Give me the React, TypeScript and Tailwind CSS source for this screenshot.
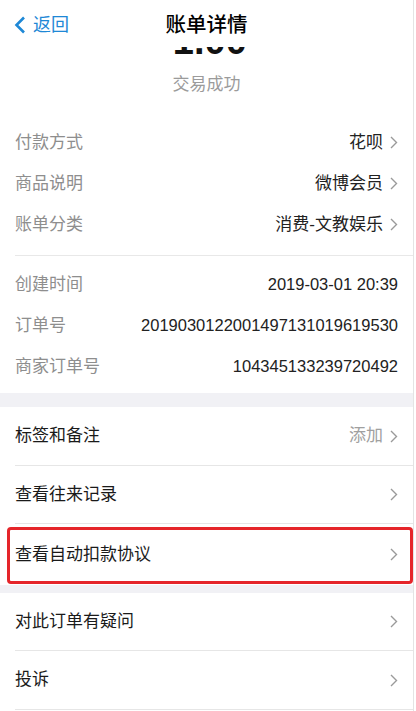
import React from 'react';

const FONT = { fontFamily: '"Liberation Sans", "Noto Sans CJK SC", sans-serif' };

function Chevron() {
  return (
    <svg width="8" height="13" viewBox="0 0 8 13" className="ml-[7px] shrink-0">
      <path d="M1 1 L6.5 6.5 L1 12" fill="none" stroke="#9a9a9a" strokeWidth="1.4" />
    </svg>
  );
}

type InfoRow = { label: string; value: string; arrow?: boolean; num?: boolean };

const basics: InfoRow[] = [
  { label: '付款方式', value: '花呗', arrow: true },
  { label: '商品说明', value: '微博会员', arrow: true },
  { label: '账单分类', value: '消费-文教娱乐', arrow: true },
];

const orderInfo: InfoRow[] = [
  { label: '创建时间', value: '2019-03-01 20:39', num: true },
  { label: '订单号', value: '2019030122001497131019619530', num: true },
  { label: '商家订单号', value: '104345133239720492', num: true },
];

function DetailRow({ row }: { row: InfoRow }) {
  return (
    <div className="flex h-[41px] items-center justify-between px-[15px]">
      <span className="text-[17px] text-[#8e8e8e]">{row.label}</span>
      <div className="flex items-center">
        <span className={row.num ? 'text-[16.5px] text-[#222]' : 'text-[17px] text-[#222]'}>
          {row.value}
        </span>
        {row.arrow && <Chevron />}
      </div>
    </div>
  );
}

function ActionRow({
  label,
  extra,
  h,
  border = true,
  children,
}: {
  label: string;
  extra?: string;
  h: string;
  border?: boolean;
  children?: React.ReactNode;
}) {
  return (
    <div className={`relative ${h}`}>
      <div
        className={`ml-[15px] flex h-full items-center justify-between pr-[15px] ${
          border ? 'border-b border-[#e6e6e6]' : ''
        }`}
      >
        <span className="text-[17px] text-[#1a1a1a]">{label}</span>
        <div className="flex items-center">
          {extra && <span className="text-[17px] text-[#a0a0a0]">{extra}</span>}
          <Chevron />
        </div>
      </div>
      {children}
    </div>
  );
}

export default function App() {
  return (
    <div className="h-[711px] w-[416px] overflow-hidden bg-white" style={FONT}>
      <div className="h-full w-[414px] border-r border-[#e4e4e4]">
        <header className="flex h-[47px] items-center bg-white pt-[3px]">
          <div className="flex w-[100px] items-center pl-[14px]">
            <svg width="12" height="18" viewBox="0 0 12 18">
              <path d="M10 1.5 L2.5 9 L10 16.5" fill="none" stroke="#1e88d6" strokeWidth="2.6" />
            </svg>
            <span className="ml-[7px] text-[18px] text-[#1e88d6]">返回</span>
          </div>
          <h1 className="flex-1 text-center text-[20.5px] font-medium text-black">账单详情</h1>
          <div className="w-[100px]" />
        </header>

        {/* amount scrolled under the nav bar: only its lower edge shows */}
        <div className="h-[8px] overflow-hidden">
          <div className="-mt-[25px] h-[38px] pr-[6px] text-center text-[38px] leading-[38px] font-semibold text-[#111]">
            -1.00
          </div>
        </div>
        <div className="mt-[18px] text-center text-[17px] leading-[24px] text-[#9b9b9b]">交易成功</div>

        <div className="pt-[25px]">
          {basics.map((r) => (
            <DetailRow key={r.label} row={r} />
          ))}
          <div className="mt-[10px] ml-[15px] border-b border-[#e8e8e8]" />
        </div>

        <div className="pt-[8px] pb-[6px]">
          {orderInfo.map((r) => (
            <DetailRow key={r.label} row={r} />
          ))}
        </div>

        <div className="h-[14px] bg-[#f1f1f5]" />

        <ActionRow label="标签和备注" extra="添加" h="h-[59px]" />
        <ActionRow label="查看往来记录" h="h-[58px]" />
        <ActionRow label="查看自动扣款协议" h="h-[61px]" border={false}>
          <div className="absolute top-[3px] bottom-[1px] left-[7px] right-0 rounded-[4px] border-[3px] border-[#e5252a]" />
        </ActionRow>

        <div className="h-[8px] bg-[#f1f1f5]" />

        <ActionRow label="对此订单有疑问" h="h-[58px]" />
        <ActionRow label="投诉" h="h-[59px]" />
      </div>
    </div>
  );
}
